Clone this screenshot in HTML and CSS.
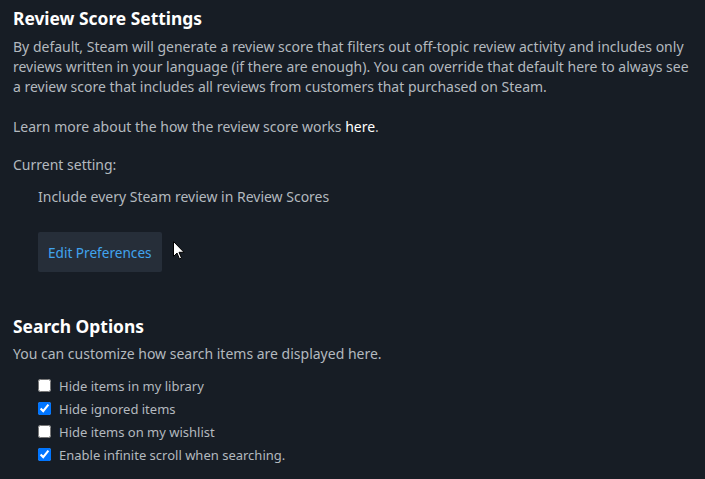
FILE: index.html
```html
<!DOCTYPE html>
<html>
<head>
<meta charset="utf-8">
<link rel="stylesheet" href="styles.css">
</head>
<body>
<div class="page">
  <section class="section">
    <h2 class="title">Review Score Settings</h2>
    <p class="text">By default, Steam will generate a review score that filters out off-topic review activity and includes only reviews written in your language (if there are enough). You can override that default here to always see a review score that includes all reviews from customers that purchased on Steam.</p>
    <p class="text learn">Learn more about the how the review score works <a class="link" href="#">here</a>.</p>
    <p class="text current-label">Current setting:</p>
    <p class="text current-value">Include every Steam review in Review Scores</p>
    <div class="btn-row">
      <button class="btn">Edit Preferences</button>
      <svg class="cursor" width="12" height="19" viewBox="0 0 12 19"><path d="M0.5 0.5 L0.5 15.5 L4 12 L6.5 18 L8.5 17 L6 11.3 L11 11.3 Z" fill="#fff" stroke="#000" stroke-width="1"/></svg>
    </div>
  </section>
  <section class="section search">
    <h2 class="title">Search Options</h2>
    <p class="text">You can customize how search items are displayed here.</p>
    <div class="options">
      <label class="opt"><input type="checkbox" class="cb"><span>Hide items in my library</span></label>
      <label class="opt"><input type="checkbox" class="cb" checked><span>Hide ignored items</span></label>
      <label class="opt"><input type="checkbox" class="cb"><span>Hide items on my wishlist</span></label>
      <label class="opt"><input type="checkbox" class="cb" checked><span>Enable infinite scroll when searching.</span></label>
    </div>
  </section>
</div>
</body>
</html>
```
FILE: styles.css
```css
html, body {
  margin: 0;
  padding: 0;
  background: #171d25;
}
body {
  font-family: "Noto Sans", "Open Sans", sans-serif;
  color: #b3b9bf;
  font-size: 14px;
}
.page {
  padding: 6px 13px 0 13px;
}
.title {
  margin: 0;
  font-size: 17.4px;
  line-height: 24px;
  font-weight: bold;
  color: #ffffff;
}
.text {
  margin: 0;
  line-height: 20px;
}
.title + .text {
  margin-top: 7px;
}
.learn {
  margin-top: 20px;
}
.link {
  color: #ffffff;
  text-decoration: none;
}
.current-label {
  margin-top: 18px;
}
.current-value {
  margin-top: 12px;
  padding-left: 25px;
}
.btn-row {
  position: relative;
  margin-top: 25px;
  padding-left: 25px;
  display: flex;
}
.btn {
  height: 40px;
  padding: 0 10px;
  border: none;
  border-radius: 2px;
  background: #262e39;
  color: #41a4ee;
  font-family: inherit;
  font-size: 13.6px;
}
.cursor {
  position: absolute;
  left: 160px;
  top: 9px;
}
.search {
  margin-top: 42px;
}
.search .text {
  margin-top: 6px;
}
.options {
  margin-top: 10px;
  padding-left: 25px;
  display: flex;
  flex-direction: column;
}
.opt {
  display: flex;
  align-items: center;
  height: 23px;
  font-size: 13px;
}
.cb {
  margin: 0 8px 0 0;
  width: 13px;
  height: 13px;
}
```
